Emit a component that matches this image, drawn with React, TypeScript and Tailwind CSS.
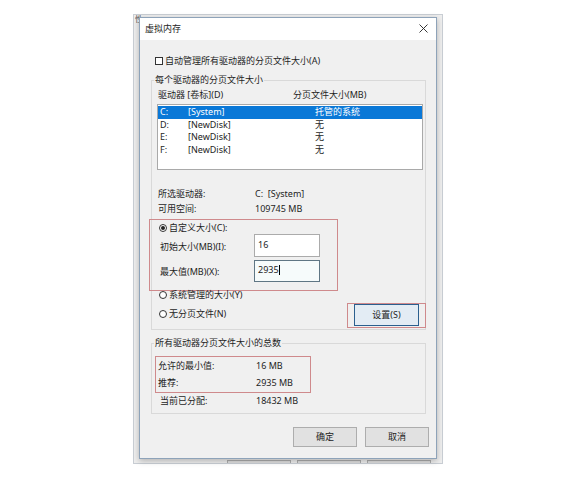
import clsx from "clsx";

type Drive = { letter: string; label: string; size: string; selected?: boolean };

const DRIVES: Drive[] = [
  { letter: "C:", label: "[System]", size: "托管的系统", selected: true },
  { letter: "D:", label: "[NewDisk]", size: "无" },
  { letter: "E:", label: "[NewDisk]", size: "无" },
  { letter: "F:", label: "[NewDisk]", size: "无" },
];

/** Windows group box: faint border with the caption sitting on the top edge. */
function GroupBox({
  title,
  className,
  children,
}: {
  title: string;
  className?: string;
  children: React.ReactNode;
}) {
  return (
    <fieldset
      className={clsx(
        "ml-[11px] w-[275px] min-w-0 border border-[#d9d9d9]",
        className,
      )}
    >
      <legend className="ml-[2px] h-[12px] px-[1px] leading-[12px]">
        {title}
      </legend>
      {children}
    </fieldset>
  );
}

function Radio({ checked, label }: { checked?: boolean; label: string }) {
  return (
    <div className="flex h-[12px] items-center gap-[2px]">
      <span className="flex size-[8px] items-center justify-center rounded-full border border-[#333] bg-white">
        {checked ? <span className="size-[4px] rounded-full bg-[#222]" /> : null}
      </span>
      <span>{label}</span>
    </div>
  );
}

function Field({ value, focused }: { value: string; focused?: boolean }) {
  return (
    <div
      className={clsx(
        "flex w-[66px] items-center pl-[3px] pb-[2px]",
        focused
          ? "h-[22px] border border-[#5f7684] bg-[#f6fbfb]"
          : "h-[23px] border border-[#ababab] bg-white",
      )}
    >
      {value}
      {focused ? <span className="h-[10px] w-px bg-black" /> : null}
    </div>
  );
}

function PushButton({ children }: { children: React.ReactNode }) {
  return (
    <button className="flex h-[20px] w-[64px] items-center justify-center border border-[#adadad] bg-[#e1e1e1] text-[#222]">
      {children}
    </button>
  );
}

export default function App() {
  return (
    <div className="relative h-[479px] w-[586px] overflow-hidden bg-white font-['Noto_Sans','Noto_Sans_CJK_SC',sans-serif] text-[9px] leading-[12px] text-[#1e1e1e]">
      {/* parent window peeking out behind the dialog */}
      <div className="absolute top-[14px] left-[133px] h-[450px] w-[310px] overflow-hidden border border-[#c9ced4] bg-[#eeeeee]">
        <span className="absolute top-[-2px] left-[1px] text-[8px] text-[#555]">性</span>
        <div className="absolute top-[445px] left-[93px] flex gap-[6px]">
          <span className="h-[20px] w-[64px] border border-[#adadad] bg-[#dedede]" />
          <span className="h-[20px] w-[64px] border border-[#adadad] bg-[#dedede]" />
          <span className="h-[20px] w-[64px] border border-[#adadad] bg-[#dedede]" />
        </div>
      </div>

      {/* 虚拟内存 dialog */}
      <div className="absolute top-[17px] left-[139px] flex h-[442px] w-[298px] flex-col border border-[#8ea3b9] bg-[#f0f0f0] shadow-[0_2px_6px_rgba(0,0,0,0.25)]">
        <div className="flex h-[22px] items-center justify-between bg-white pr-[8px] pl-[5px]">
          <span>虚拟内存</span>
          <svg width="9" height="9" viewBox="0 0 9 9" className="mt-[-2px]">
            <path d="M0.5 0.5 L8.5 8.5 M8.5 0.5 L0.5 8.5" stroke="#222" strokeWidth="0.9" />
          </svg>
        </div>

        <div className="flex flex-col pt-[15px]">
          <div className="ml-[15px] flex h-[12px] items-center gap-[2px]">
            <span className="size-[8px] border border-[#333] bg-white" />
            <span>自动管理所有驱动器的分页文件大小(A)</span>
          </div>

          <GroupBox title="每个驱动器的分页文件大小" className="mt-[7px] pb-[1px]">
            <div className="mt-[3px] flex h-[12px] items-center pl-[6px]">
              <span className="w-[135px]">驱动器 [卷标](D)</span>
              <span>分页文件大小(MB)</span>
            </div>

            <div className="mt-[3px] ml-[5px] h-[66px] w-[266px] border border-[#a9a9a9] bg-white pt-[1px]">
              {DRIVES.map((d) => (
                <div
                  key={d.letter}
                  className={clsx(
                    "flex h-[12.5px] items-center pl-[2px]",
                    d.selected && "bg-[#0a78d7] text-white",
                  )}
                >
                  <span className="w-[28px]">{d.letter}</span>
                  <span className="w-[127px]">{d.label}</span>
                  <span>{d.size}</span>
                </div>
              ))}
            </div>

            <div className="mt-[16px] flex h-[15px] items-center pl-[6px]">
              <span className="w-[97px]">所选驱动器:</span>
              <span>C:&nbsp;&nbsp;[System]</span>
            </div>
            <div className="flex h-[15px] items-center pl-[6px]">
              <span className="w-[97px]">可用空间:</span>
              <span>109745 MB</span>
            </div>

            {/* highlight box around the custom size controls */}
            <div className="mt-[3px] ml-[-3px] h-[72px] w-[189px] border border-[#cf8a8c] pt-[2px]">
              <div className="ml-[9px]">
                <Radio checked label="自定义大小(C):" />
              </div>
              <div className="flex items-center pl-[10px]">
                <span className="w-[94px] pt-[2px]">初始大小(MB)(I):</span>
                <Field value="16" />
              </div>
              <div className="mt-[3px] flex items-center pl-[10px]">
                <span className="w-[94px] pt-[2px]">最大值(MB)(X):</span>
                <Field value="2935" focused />
              </div>
            </div>

            <div className="mt-[-2px] ml-[7px]">
              <Radio label="系统管理的大小(Y)" />
            </div>
            <div className="mr-[-1px] flex items-start justify-between">
              <div className="mt-[7px] ml-[7px]">
                <Radio label="无分页文件(N)" />
              </div>
              <div className="mt-[2px] h-[25px] w-[79px] border border-[#cf8a8c] px-[6px]">
                <button className="flex h-[22px] w-[65px] items-center justify-center border border-[#2b5f8e] bg-[#e3ecf4] text-[#222]">
                  设置(S)
                </button>
              </div>
            </div>
          </GroupBox>

          <GroupBox title="所有驱动器分页文件大小的总数" className="mt-[7px] pb-[4px]">
            <div className="mt-[7px] ml-[3px] h-[37px] w-[156px] border border-[#cf8a8c] pl-[2px]">
              <div className="flex h-[17px] items-center">
                <span className="w-[98px]">允许的最小值:</span>
                <span>16 MB</span>
              </div>
              <div className="flex h-[17px] items-center">
                <span className="w-[98px]">推荐:</span>
                <span>2935 MB</span>
              </div>
            </div>
            <div className="flex h-[16px] items-center pl-[8px]">
              <span className="w-[96px]">当前已分配:</span>
              <span>18432 MB</span>
            </div>
          </GroupBox>

          <div className="mt-[13px] flex justify-end gap-[8px] pr-[7px]">
            <PushButton>确定</PushButton>
            <PushButton>取消</PushButton>
          </div>
        </div>
      </div>
    </div>
  );
}
